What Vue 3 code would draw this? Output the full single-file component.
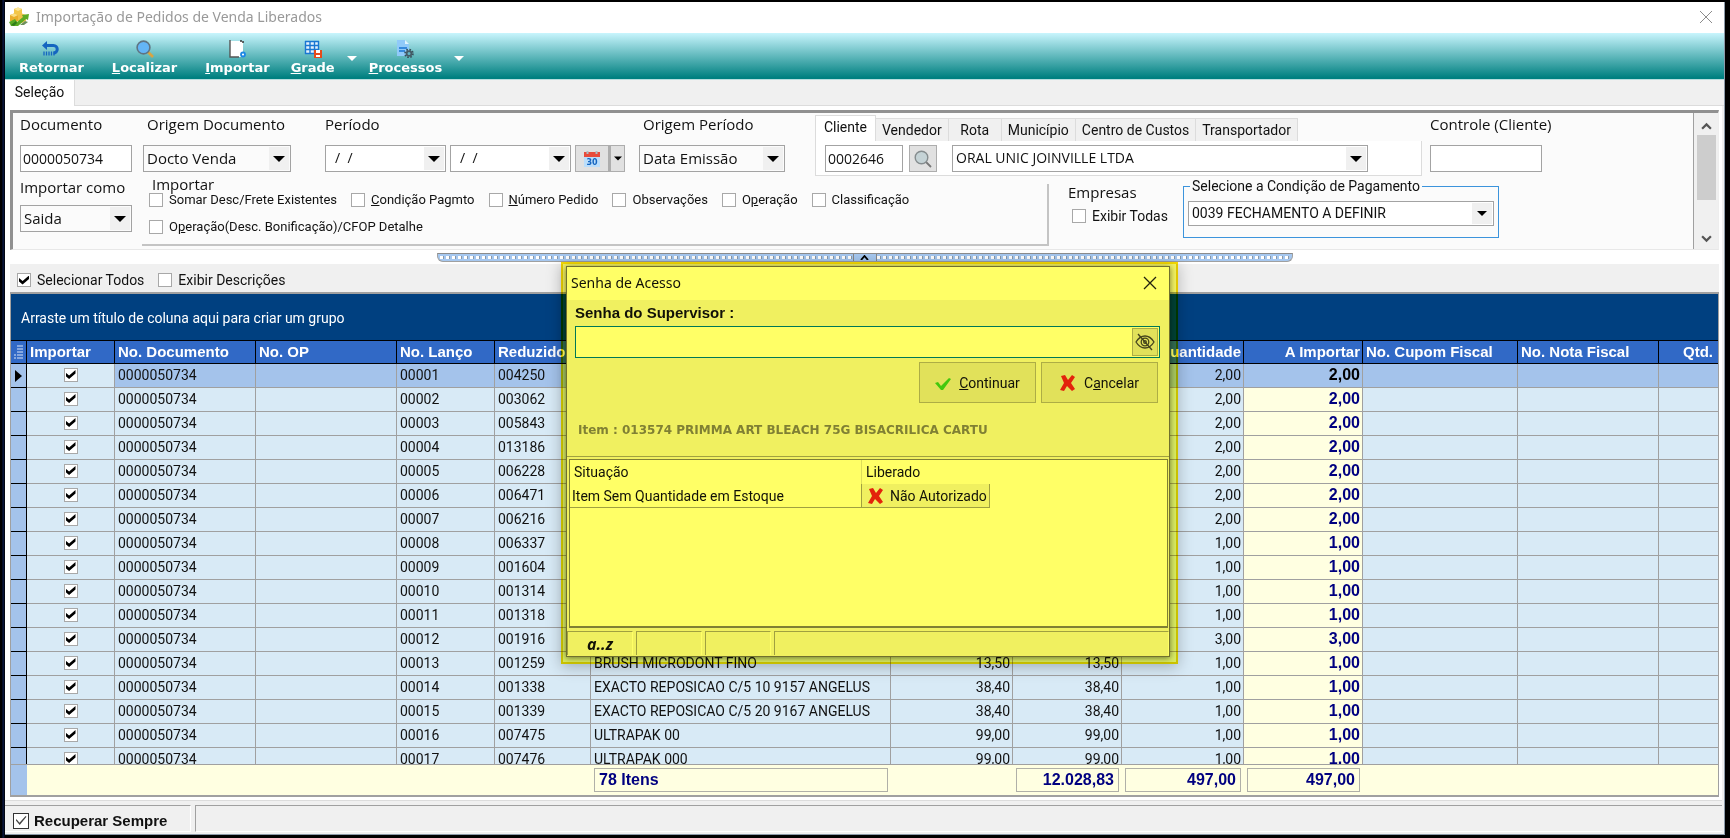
<script setup>
import { ref } from 'vue'

const cols = [16, 88, 141, 141, 98, 96, 300, 122, 109, 122, 119, 155, 141, null]

const heads = [
  { t: 'Importar' }, { t: 'No. Documento' }, { t: 'No. OP' }, { t: 'No. Lanço' }, { t: 'Reduzido' },
  { t: '' }, { t: '' }, { t: '' },
  { t: 'Quantidade', r: true }, { t: 'A Importar', r: true },
  { t: 'No. Cupom Fiscal' }, { t: 'No. Nota Fiscal' }, { t: 'Qtd.', r: true, end: true }
]

const raw = [
  ['004250', '2,00'], ['003062', '2,00'], ['005843', '2,00'], ['013186', '2,00'],
  ['006228', '2,00'], ['006471', '2,00'], ['006216', '2,00'], ['006337', '1,00'],
  ['001604', '1,00'], ['001314', '1,00'], ['001318', '1,00'], ['001916', '3,00'],
  ['001259', '1,00', 'BRUSH MICRODONT FINO', '13,50'],
  ['001338', '1,00', 'EXACTO REPOSICAO C/5 10 9157 ANGELUS', '38,40'],
  ['001339', '1,00', 'EXACTO REPOSICAO C/5 20 9167 ANGELUS', '38,40'],
  ['007475', '1,00', 'ULTRAPAK 00', '99,00'],
  ['007476', '1,00', 'ULTRAPAK 000', '99,00']
]
const rows = ref(raw.map(([code, qty, desc = '', price = ''], i) => ({
  n: String(i + 1).padStart(5, '0'), code, qty, desc, price, on: true
})))

const clientTabs = ['Vendedor', 'Rota', 'Município', 'Centro de Custos', 'Transportador']
</script>

<template>
  <div class="desktop">
    <main class="window">
      <header class="titlebar">
        <svg class="app-icon" viewBox="0 0 20 20">
          <path d="M5 2l4-1.500 4 1.500v6l-4 2-4-2z" fill="#f3c648" />
          <path d="M5 2l4 2 4-2-4-1.500z" fill="#fce79a" />
          <path d="M1 8l4-1.500 4 1.500v6l-4 2-4-2z" fill="#e9ae2c" />
          <path d="M1 8l4 2 4-2-4-1.500z" fill="#fadf85" />
          <path d="M9 8l4-1.500 4 1.500v6l-4 2-4-2z" fill="#f0c04a" />
          <path d="M0 15l6-3 2 3 6-5-1-2 7-1-1 6-2-1-8 7H2z" fill="#5cab25" />
          <path d="M2 18l5-4 1 2-3 3z" fill="#2f7d1a" />
          <path d="M11 18l5-4 3 1-4 3z" fill="#6c8f5c" />
        </svg>
        <h1>Importação de Pedidos de Venda Liberados</h1>
        <button class="close" aria-label="Fechar">
          <svg viewBox="0 0 14 14"><path d="M1 1l12 12M13 1L1 13" stroke="#8c8c8c" fill="none" /></svg>
        </button>
      </header>

      <nav class="toolbar">
        <button class="tool">
          <svg viewBox="0 0 20 18">
            <path d="M3 5.500h9.500a3.500 3.500 0 0 1 0 7.500" fill="none" stroke="#1565c0" stroke-width="3" />
            <path d="M1 5.500L6 1v9z" fill="#1565c0" />
            <path d="M3 11.500v4M5.500 11.500v4M8 11.500v4M10.500 11.500v4M13 11.500v4" stroke="#1565c0" stroke-width="1.300" />
          </svg>
          <span>Retornar</span>
        </button>
        <button class="tool">
          <svg viewBox="0 0 20 18">
            <path d="M13 12l5 5" stroke="#d9a441" stroke-width="2.600" />
            <circle cx="8.500" cy="7.500" r="6.400" fill="#64b5f6" stroke="#5f7483" stroke-width="1.600" />
          </svg>
          <span><u>L</u>ocalizar</span>
        </button>
        <button class="tool">
          <svg viewBox="0 0 20 18">
            <path d="M3 1h13v16H3z" fill="#fff" /><path d="M3 0v17h9" fill="none" stroke="#555" stroke-width="1.400" />
            <path d="M13 1h3v3" fill="none" stroke="#333" stroke-width="1.500" stroke-dasharray="2 1" />
            <circle cx="16" cy="14.500" r="2" fill="#fff" stroke="#1e88e5" stroke-width="1.800" />
          </svg>
          <span><u>I</u>mportar</span>
        </button>
        <button class="tool tight">
          <svg viewBox="0 0 20 18">
            <path d="M2 1h14v13H2z" fill="#e3f2fd" />
            <path d="M2 1.500h14M2 5.500h14M2 9.500h14M2 13.500h14M2.500 1v13M7 1v13M11.500 1v13M15.500 1v13" stroke="#1976d2" stroke-width="1.400" />
            <path d="M11 10h8v8h-8z" fill="#e64a19" /><path d="M13 10h4v3h-4zM13 15h4v2h-4z" fill="#fff" />
          </svg>
          <span><u>G</u>rade</span>
        </button>
        <button class="drop" aria-label="Opções de grade"><svg viewBox="0 0 10 5"><path d="M0 0h10L5 5z" fill="#fff" /></svg></button>
        <button class="tool">
          <svg viewBox="0 0 20 18">
            <path d="M2 0h8l4 4v12H2z" fill="#90caf9" /><path d="M10 0l4 4h-4z" fill="#e1f5fe" />
            <path d="M4 8h8M4 11h6" stroke="#1976d2" stroke-width="1.600" />
            <circle cx="14" cy="13.500" r="3.900" fill="none" stroke="#37505c" stroke-width="1.800" stroke-dasharray="1.600 1.450" />
            <circle cx="14" cy="13.500" r="2.400" fill="#64b5c6" stroke="#455a64" stroke-width="1.800" />
          </svg>
          <span><u>P</u>rocessos</span>
        </button>
        <button class="drop" aria-label="Opções de processos"><svg viewBox="0 0 10 5"><path d="M0 0h10L5 5z" fill="#fff" /></svg></button>
      </nav>

      <div class="tabs"><button class="tab">Seleção</button></div>

      <section class="page">
        <div class="filters">
          <div class="fields">
            <div class="line">
              <div class="field w-doc"><label for="doc">Documento</label><input id="doc" class="box" value="0000050734"></div>
              <div class="field w-origin">
                <label for="orig">Origem Documento</label>
                <span class="combo shaded"><select id="orig"><option>Docto Venda</option></select><i><svg viewBox="0 0 12 6"><path d="M0 0h12L6 6z" /></svg></i></span>
              </div>
              <div class="field period">
                <label for="p1">Período</label>
                <div class="dates">
                  <span class="combo"><input id="p1" class="date" value="/  /"><i><svg viewBox="0 0 12 6"><path d="M0 0h12L6 6z" /></svg></i></span>
                  <span class="combo"><input class="date" aria-label="Período final" value="/  /"><i><svg viewBox="0 0 12 6"><path d="M0 0h12L6 6z" /></svg></i></span>
                  <div class="split">
                    <button aria-label="Calendário">
                      <svg class="cal" viewBox="0 0 16 16">
                        <path d="M0 5h16v11H0z" fill="#bbdefb" /><path d="M0 1h16v5H0z" fill="#e74c3c" />
                        <path d="M3.500 0v3M12.500 0v3" stroke="#b0bec5" stroke-width="2" />
                        <text x="8" y="14" text-anchor="middle">30</text>
                      </svg>
                    </button>
                    <button aria-label="Abrir calendário"><svg class="mini" viewBox="0 0 12 6"><path d="M0 0h12L6 6z" /></svg></button>
                  </div>
                </div>
              </div>
              <div class="field w-issue">
                <label for="op">Origem Período</label>
                <span class="combo shaded"><select id="op"><option>Data Emissão</option></select><i><svg viewBox="0 0 12 6"><path d="M0 0h12L6 6z" /></svg></i></span>
              </div>
              <div class="client">
                <div class="ctabs">
                  <button class="on">Cliente</button>
                  <button v-for="t in clientTabs" :key="t">{{ t }}</button>
                </div>
                <div class="cpage">
                  <input class="box code" aria-label="Código do cliente" value="0002646">
                  <button class="find" aria-label="Procurar cliente">
                    <svg viewBox="0 0 18 18"><path d="M11.500 11.500l5.500 5.500" stroke="#777" stroke-width="1.800" /><circle cx="7.500" cy="7.500" r="6.300" fill="#c5d3d6" stroke="#858c8e" stroke-width="1.400" /></svg>
                  </button>
                  <span class="combo name"><select aria-label="Cliente"><option>ORAL UNIC JOINVILLE LTDA</option></select><i><svg viewBox="0 0 12 6"><path d="M0 0h12L6 6z" /></svg></i></span>
                </div>
              </div>
              <div class="field w-control"><label for="ctl">Controle (Cliente)</label><input id="ctl" class="box"></div>
            </div>

            <div class="line second">
              <div class="field w-doc">
                <label for="como">Importar como</label>
                <span class="combo shaded"><select id="como"><option>Saida</option></select><i><svg viewBox="0 0 12 6"><path d="M0 0h12L6 6z" /></svg></i></span>
              </div>
              <fieldset class="imports">
                <legend>Importar</legend>
                <div class="checks">
                  <label><input type="checkbox">Somar Desc/Frete Existentes</label>
                  <label><input type="checkbox"><span><u>C</u>ondição Pagmto</span></label>
                  <label><input type="checkbox"><span><u>N</u>úmero Pedido</span></label>
                  <label><input type="checkbox">Observações</label>
                  <label><input type="checkbox"><span>O<u>p</u>eração</span></label>
                  <label><input type="checkbox">Classificação</label>
                </div>
                <div class="checks">
                  <label><input type="checkbox"><span>O<u>p</u>eração(Desc. Bonificação)/CFOP Detalhe</span></label>
                </div>
              </fieldset>
              <div class="companies">
                <h2>Empresas</h2>
                <label><input type="checkbox">Exibir Todas</label>
              </div>
              <fieldset class="payment">
                <legend>Selecione a Condição de Pagamento</legend>
                <span class="combo small"><select aria-label="Condição de pagamento"><option>0039 FECHAMENTO A DEFINIR</option></select><i><svg viewBox="0 0 12 6"><path d="M0 0h12L6 6z" /></svg></i></span>
              </fieldset>
            </div>
          </div>
          <div class="scroll">
            <svg viewBox="0 0 10 7"><path d="M1 6l4-4 4 4" /></svg>
            <span class="thumb"></span>
            <svg class="down" viewBox="0 0 10 7"><path d="M1 1l4 4 4-4" /></svg>
          </div>
        </div>

        <div class="splitter"><span class="dots"></span><span class="grip"><svg viewBox="0 0 8 5"><path d="M0.500 5L4 1l3.500 4" fill="none" stroke="#000" stroke-width="1.800" /></svg></span><span class="dots"></span></div>

        <div class="options">
          <label><input type="checkbox" checked>Selecionar Todos</label>
          <label><input type="checkbox">Exibir Descrições</label>
        </div>

        <div class="grid">
          <div class="group">Arraste um título de coluna aqui para criar um grupo</div>
          <div class="clip">
            <table class="data">
              <colgroup><col v-for="(w, i) in cols" :key="i" :style="w ? { width: w + 'px' } : {}"></colgroup>
              <thead>
                <tr>
                  <th class="mark"><svg viewBox="0 0 10 14"><path d="M1 10h2M1 13h2M4 1h6M4 4h6M4 7h6M4 10h6M4 13h6" stroke="#dce6f8" /></svg></th>
                  <th v-for="(h, i) in heads" :key="i" :class="{ r: h.r, end: h.end }">{{ h.t }}</th>
                </tr>
              </thead>
              <tbody>
                <tr v-for="(r, i) in rows" :key="r.n" :class="{ current: i === 0 }">
                  <td class="ind"><svg v-if="i === 0" viewBox="0 0 7 12"><path d="M0 0l7 6-7 6z" /></svg></td>
                  <td class="chk"><input v-model="r.on" type="checkbox" :aria-label="r.n"></td>
                  <td>0000050734</td><td></td><td>{{ r.n }}</td><td>{{ r.code }}</td>
                  <td>{{ r.desc }}</td><td class="r">{{ r.price }}</td><td class="r">{{ r.price }}</td>
                  <td class="r">{{ r.qty }}</td><td class="r amount">{{ r.qty }}</td>
                  <td></td><td></td><td></td>
                </tr>
              </tbody>
            </table>
          </div>
          <table class="totals">
            <colgroup><col v-for="(w, i) in cols" :key="i" :style="w ? { width: w + 'px' } : {}"></colgroup>
            <tbody>
              <tr>
                <td class="ind"></td><td colspan="5"></td>
                <td><div class="sum left">78 Itens</div></td><td></td>
                <td><div class="sum">12.028,83</div></td>
                <td><div class="sum">497,00</div></td>
                <td><div class="sum">497,00</div></td>
                <td colspan="3"></td>
              </tr>
            </tbody>
          </table>
        </div>
      </section>

      <footer class="status">
        <label class="keep"><input type="checkbox" checked>Recuperar Sempre</label>
        <span class="pane"></span>
      </footer>
    </main>

    <div class="highlight">
      <div class="dialog" role="dialog" aria-labelledby="dlg">
        <header class="dtitle">
          <h2 id="dlg">Senha de Acesso</h2>
          <button aria-label="Fechar senha"><svg viewBox="0 0 14 14"><path d="M1 1l12 12M13 1L1 13" stroke="#222" stroke-width="1.300" fill="none" /></svg></button>
        </header>
        <div class="dbody">
          <label for="pwd">Senha do Supervisor :</label>
          <div class="pwd">
            <input id="pwd" type="password">
            <button aria-label="Mostrar senha">
              <svg viewBox="0 0 20 18" fill="none" stroke="#444" stroke-width="1.300"><path d="M1 9c5-8 13-8 18 0-5 8-13 8-18 0z" /><circle cx="10" cy="9" r="3.800" /><circle cx="10" cy="9" r="1.300" /><path d="M3 1l14 16" /></svg>
            </button>
          </div>
          <div class="actions">
            <button><svg viewBox="0 0 16 16"><path d="M0 8l3-1 3 4 8-8 2 1-8 11H6z" fill="#43c81c" /></svg><span><u>C</u>ontinuar</span></button>
            <button><svg viewBox="0 0 16 16"><path d="M1 1l4-1 3 5 4-5 3 2-4 6 4 6-3 2-5-5-3 5-4-1 4-7z" fill="#e3231b" /></svg><span>C<u>a</u>ncelar</span></button>
          </div>
          <p>Item : 013574 PRIMMA ART BLEACH 75G BISACRILICA CARTU</p>
        </div>
        <div class="dlist">
          <table>
            <thead><tr><th>Situação</th><th>Liberado</th></tr></thead>
            <tbody>
              <tr>
                <td>Item Sem Quantidade em Estoque</td>
                <td><button><svg viewBox="0 0 16 16"><path d="M1 1l4-1 3 5 4-5 3 2-4 6 4 6-3 2-5-5-3 5-4-1 4-7z" fill="#e3231b" /></svg>Não Autorizado</button></td>
              </tr>
            </tbody>
          </table>
        </div>
        <footer class="dstatus"><span class="az">a..z</span><span></span><span></span><span class="rest"></span></footer>
      </div>
    </div>
  </div>
</template>

<style>
body { background: #000; }
</style>

<style scoped>
* { box-sizing: border-box; }
.desktop {
  position: relative;
  height: 100vh;
  padding: 2px 5px 3px;
  background: linear-gradient(90deg, #000 0, #000 2px, #0a1a4a 3px, #000 5px) #000;
  font: 14px/18px Roboto, "Liberation Sans", sans-serif;
  color: #111;
  overflow: hidden;
}
button, input, select { font: inherit; color: inherit; margin: 0; padding: 0; border: 0; background: none; border-radius: 0; }
select { appearance: none; outline: 0; }
input { outline: 0; min-width: 0; }
svg { display: block; flex: none; }
h1, h2, p { margin: 0; font-weight: 400; }
label { white-space: nowrap; }
input[type="checkbox"] {
  appearance: none;
  display: grid;
  place-items: center;
  flex: none;
  width: 14px;
  height: 14px;
  border: 1px solid #a8a8a8;
  background: #fff;
}
input[type="checkbox"]:checked::before {
  content: "";
  width: 10px;
  height: 9px;
  background: #000;
  clip-path: polygon(0 28%, 36% 60%, 100% 0, 100% 38%, 36% 100%, 0 68%);
}

.window { display: flex; flex-direction: column; height: 100%; background: #f0f0f0; border-right: 1px solid #8c9aa8; border-bottom: 1px solid #8c9aa8; }
.titlebar { display: flex; align-items: center; height: 31px; padding: 0 11px 2px 4px; background: #fff; }
.app-icon { width: 20px; height: 20px; }
h1 { flex: 1; margin-left: 7px; font: 14px/20px "Noto Sans", "Open Sans", sans-serif; color: #999; }
.close svg { width: 14px; height: 14px; }

.toolbar { display: flex; height: 47px; background: linear-gradient(#c8f5fd, #008080 97%); border-bottom: 1px solid #b8dede; }
.tool { display: flex; flex-direction: column; align-items: center; justify-content: flex-end; padding: 0 14px 2px; color: #fff; font: bold 13px/18px "DejaVu Sans", Verdana, sans-serif; }
.tight { padding-left: 7px; }
.tight, .drop + .tool { padding-right: 12px; }
.drop + .tool { padding-left: 12px; }
.tool svg { width: 20px; height: 18px; margin-bottom: 1px; }
.drop { display: flex; align-items: center; padding-top: 4px; }
.drop svg { width: 10px; height: 5px; }

.tabs { height: 26px; border-bottom: 1px solid #dcdcdc; }
.tab { height: 26px; width: 70px; padding-bottom: 2px; background: #fff; border-right: 1px solid #dcdcdc; }

.page { display: flex; flex-direction: column; flex: 1; min-height: 0; padding: 4px 3px 3px 5px; margin-right: 2px; background: #fff; border-bottom: 1px solid #dcdcdc; }
.filters { display: flex; height: 140px; flex: none; background: #fbfbfb; border: solid; border-width: 3px 1px 1px 3px; border-color: #909090 #eee #e8e8e8 #909090; }
.fields { flex: 1; min-width: 0; padding-left: 7px; }
.line { display: flex; height: 64px; }
.second { height: 72px; }
.field { display: flex; flex-direction: column; flex: none; }
.field label, .companies h2 { font: 15px/20px "Open Sans", "Noto Sans", sans-serif; }
.field > label { padding: 1px 0 11px; }
.w-doc { width: 112px; }
.w-origin { width: 148px; margin-left: 11px; }
.line .w-origin > label, .line .w-issue > label { padding-left: 4px; }
.period { margin-left: 34px; }
.w-issue { width: 146px; margin-left: 14px; }
.w-control { width: 112px; margin-left: 8px; }
.box, .combo { height: 27px; border: 1px solid #a3a3a3; background: #fff; font: 14px/20px "Open Sans", "Noto Sans", sans-serif; }
.box { width: 100%; padding: 0 2px 1px; }
.combo { display: flex; padding: 1px; }
.combo select, .combo input { flex: 1; min-width: 0; padding: 0 0 1px 2px; }
.combo i { display: grid; place-items: center; width: 20px; background: #f0f0f0; pointer-events: none; }
.combo svg { width: 12px; height: 6px; }
.shaded { background: #fbfbfb; font-size: 15px; }
.dates { display: flex; gap: 4px; }
.dates .combo { width: 121px; }
.combo .date { padding-left: 8px; white-space: pre; }
.split { display: flex; width: 50px; height: 27px; }
.split button { display: grid; place-items: center; border: 1px solid #adadad; background: #e1e1e1; width: 34px; }
.split button + button { width: 16px; border-left-width: 2px; }
.cal { width: 16px; height: 16px; }
.cal text { font: bold 8px "DejaVu Sans", sans-serif; fill: #1565c0; }
.mini { width: 8px; height: 5px; }

.client { flex: 0 1 607px; margin-left: 30px; padding-top: 2px; }
.ctabs { display: flex; align-items: flex-end; height: 26px; }
.ctabs button { height: 23px; min-width: 53px; padding: 0 6px; border: 1px solid #dcdcdc; border-left: 0; border-bottom: 0; background: #f0f0f0; white-space: nowrap; }
.ctabs .on { height: 26px; width: 61px; padding: 0 0 4px; background: #fff; border-left: 1px solid #dcdcdc; }
.cpage { display: flex; height: 35px; padding: 4px 9px 0; background: #fff; border: 1px solid #dcdcdc; border-top: 0; }
.code { width: 78px; flex: none; }
.find { display: grid; place-items: center; width: 28px; height: 27px; margin: 0 15px 0 6px; border: 1px solid #adadad; background: #e1e1e1; }
.find svg { width: 18px; height: 18px; }
.name { width: 416px; }

.second .field > label { padding: 0 0 8px; }
fieldset { margin: 0; padding: 0; min-width: 0; }
.imports { width: 907px; height: 69px; margin-left: 10px; padding-left: 7px; border: 0; border-right: 2px solid #c4c4c4; border-bottom: 2px solid #c4c4c4; flex: 0 1 907px; }
.imports legend { padding: 0 3px; font: 15px/14px "Open Sans", "Noto Sans", sans-serif; }
.checks { display: flex; gap: 14px; height: 27px; font-size: 13px; }
.checks label, .companies label, .options label { display: flex; align-items: center; gap: 6px; height: 18px; }
.companies { margin-left: 19px; width: 115px; flex: none; padding-top: 5px; }
.companies label { margin: 5px 0 0 4px; }
.payment { width: 316px; height: 61px; padding: 6px 4px; border: 1px solid #3c94dc; }
.payment legend { margin-left: 2px; padding: 0 2px; line-height: 18px; }
.small { height: 25px; font: inherit; line-height: 20px; }
.small svg { width: 10px; height: 5px; }

.scroll { display: flex; flex-direction: column; align-items: center; width: 25px; padding: 9px 0 6px; border-left: 1px solid #a0a0a0; background: #f0f0f0; }
.scroll svg { width: 11px; height: 8px; }
.scroll path { fill: none; stroke: #555; stroke-width: 2; }
.thumb { width: 19px; height: 65px; margin-top: 5px; background: #cdcdcd; }
.down { margin-top: auto; }

.splitter { display: flex; align-items: center; align-self: center; flex: none; width: 856px; height: 9px; margin: 3px 0 2px; padding: 0 2px; background: #a6c8f0; border: 1px solid #a0a0a0; border-top: 1px solid #8c8c8c; border-radius: 0 0 6px 6px; }
.dots { flex: 1; height: 3px; background: repeating-linear-gradient(90deg, #fff 0 3px, #8a98a8 3px 4px, #a6c8f0 4px 6px); }
.grip { display: grid; place-items: center; width: 24px; height: 7px; border: 1px solid #888; border-width: 0 1px; }
.grip svg { width: 9px; height: 5px; }
.options { display: flex; align-items: center; gap: 14px; height: 28px; flex: none; padding: 4px 0 0 7px; background: #f0f0f0; }

.grid { display: flex; flex-direction: column; flex: 1; min-height: 0; border: 1px solid #a0a0a0; border-width: 2px 1px 2px; }
.group { flex: none; height: 46px; padding-left: 10px; line-height: 48px; background: #004080; color: #fff; }
.clip { flex: 1; min-height: 0; overflow: hidden; }
table { width: 100%; table-layout: fixed; border-collapse: separate; border-spacing: 0; }
th, td { padding: 0; text-align: left; white-space: nowrap; overflow: hidden; }
.data th { height: 24px; padding: 0 3px; background: #3169c6; border: solid #000; border-width: 1px 1px 1px 0; color: #fff; font: bold 15px/20px "Liberation Sans", Arial, sans-serif; }
.data .mark { padding: 0 2px; }
.mark svg { width: 10px; height: 14px; }
.data td { height: 24px; padding: 0 3px 2px; background: #d8eaf6; border: solid #a0a0a0; border-width: 0 1px 1px 0; }
.data .r { text-align: right; padding-left: 2px; padding-right: 2px; }
.data .end { padding-right: 5px; border-right: 0; }
.data td:last-child { border-right: 0; }
.data .ind { background: #a4c3eb; border-color: #000; padding: 0 4px; }
.ind svg { width: 7px; height: 12px; }
.data .chk input { margin: auto; }
.data .amount { background: #ffffe1; color: #000080; font: bold 16px/18px "Liberation Sans", Arial, sans-serif; }
.data .current td { background: #a4c3eb; }
.data .current .chk { background: #d8eaf6; }
.data .current .amount { color: #000; }
.totals { flex: none; height: 31px; background: #ffffe1; border-top: 1px solid #a0a0a0; }
.totals .ind { background: #a4c3eb; }
.sum { height: 24px; margin: 0 3px; padding: 0 4px; border: 1px solid #b0b0a8; color: #000080; font: bold 16px/22px "Liberation Sans", Arial, sans-serif; text-align: right; }
.left { text-align: left; }

.status { display: flex; flex: none; gap: 4px; height: 33px; padding: 4px 2px 2px 0; }
.keep { display: flex; align-items: center; gap: 5px; width: 186px; padding: 4px 0 0 8px; border: 1px solid #fff; border-top-color: #a0a0a0; border-left: 0; font: bold 15px/20px "Liberation Sans", Arial, sans-serif; }
.keep input[type="checkbox"] { width: 16px; height: 16px; border-color: #333; }
.keep input[type="checkbox"]:checked::before { width: 11px; height: 9px; background: #444; clip-path: polygon(0 45%, 10% 36%, 36% 74%, 92% 0, 100% 8%, 38% 100%); }
.pane { flex: 1; border-left: 1px solid #a0a0a0; border-top: 1px solid #a0a0a0; border-bottom: 1px solid #fff; }

/* multiply tint lies over the dialog and the strip of window around it */
.highlight { position: absolute; left: 561px; top: 262px; width: 617px; padding: 4px 8px 7px 5px; box-shadow: 0 3px 14px rgba(0, 0, 0, 0.25); }
.highlight::after { content: ""; position: absolute; inset: 0; background: #ffff66; border: 2px solid #f0d400; mix-blend-mode: multiply; pointer-events: none; }
.dialog { background: #f0f0f0; border: 1px solid #707070; box-shadow: 0 1px 6px rgba(0, 0, 0, 0.5); }
.dtitle { display: flex; align-items: center; justify-content: space-between; height: 33px; padding: 0 12px 2px 4px; background: #fff; }
.dtitle h2 { font: 14px/20px "Noto Sans", "Open Sans", sans-serif; }
.dtitle svg { width: 14px; height: 14px; }
.dbody { display: flex; flex-direction: column; height: 157px; padding: 3px 9px 0 8px; border-bottom: 1px solid #a0a0a0; }
.dbody label { font: bold 15px/20px "Liberation Sans", Arial, sans-serif; }
.pwd { display: flex; align-items: center; height: 32px; margin-top: 3px; padding-right: 1px; border: 1px solid #0078d7; background: #fff; }
.pwd input { flex: 1; height: 28px; }
.pwd button { display: grid; place-items: center; width: 26px; height: 28px; border: 1px solid #adadad; background: #e1e1e1; }
.pwd svg { width: 20px; height: 18px; }
.actions { display: flex; justify-content: flex-end; gap: 5px; margin: 4px 2px 0; }
.actions button { display: flex; align-items: center; justify-content: center; gap: 8px; width: 117px; height: 41px; border: 1px solid #adadad; background: #e1e1e1; }
.actions svg, .dlist svg { width: 16px; height: 16px; }
.dbody p { margin: 17px 0 0 3px; font: bold 12px/20px "DejaVu Sans", Verdana, sans-serif; color: #808080; }
.dlist { height: 169px; margin: 2px 1px 0 2px; background: #fff; border: 1px solid #808080; border-bottom-width: 2px; }
.dlist th { height: 24px; padding-left: 4px; font-weight: 400; }
.dlist th:first-child { width: 292px; border-right: 1px solid #ddd; }
.dlist td { height: 24px; padding: 0; }
.dlist td:first-child { padding-left: 2px; border-right: 1px solid #a0a0a0; border-bottom: 1px solid #a0a0a0; }
.dlist button { display: flex; align-items: center; gap: 6px; width: 128px; height: 24px; padding-left: 6px; background: #f0f0f0; border: 1px solid #a0a0a0; border-width: 0 1px 1px 0; }
.dstatus { display: flex; gap: 3px; height: 28px; padding: 3px 0 1px; }
.dstatus span { width: 66px; border: solid #a0a0a0; border-width: 1px 0 0 1px; border-right: 1px solid #fff; }
.dstatus .rest { flex: 1; }
.dstatus .az { padding-top: 2px; text-align: center; font: italic bold 16px/20px "Open Sans", sans-serif; }
</style>
